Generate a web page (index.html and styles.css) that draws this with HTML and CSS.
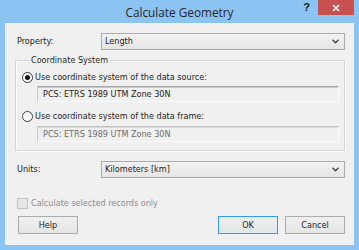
FILE: index.html
```html
<!DOCTYPE html>
<html lang="en">

<head>
    <meta charset="utf-8">
    <title>Calculate Geometry</title>
    <link rel="stylesheet" href="styles.css">
</head>

<body>
    <div class="window">
        <!-- title bar -->
        <div class="titlebar">
            <div></div>
            <div class="title">Calculate Geometry</div>
            <div class="caption-btns">
                <span class="help-q">?</span>
                <span class="close-btn">
                    <svg width="8" height="8" viewBox="0 0 8 8">
                        <path d="M1 1 L7 7 M7 1 L1 7" stroke="#fff" stroke-width="1.6" />
                    </svg>
                </span>
            </div>
        </div>

        <div class="client">
            <div class="field-row">
                <span class="field-label">Property:</span>
                <div class="combo">
                    <span>Length</span>
                    <svg class="chev" width="7" height="5" viewBox="0 0 7 5">
                        <path d="M0.5 0.8 L3.5 3.8 L6.5 0.8" fill="none" stroke="#444" stroke-width="1.3" />
                    </svg>
                </div>
            </div>

            <fieldset class="group">
                <legend>Coordinate System</legend>
                <div class="radio-row">
                    <span class="radio checked"></span>
                    <span>Use coordinate system of the data source:</span>
                </div>
                <div class="textbox">PCS: ETRS 1989 UTM Zone 30N</div>
                <div class="radio-row second">
                    <span class="radio"></span>
                    <span>Use coordinate system of the data frame:</span>
                </div>
                <div class="textbox disabled">PCS: ETRS 1989 UTM Zone 30N</div>
            </fieldset>

            <div class="field-row units">
                <span class="field-label">Units:</span>
                <div class="combo">
                    <span>Kilometers [km]</span>
                    <svg class="chev" width="7" height="5" viewBox="0 0 7 5">
                        <path d="M0.5 0.8 L3.5 3.8 L6.5 0.8" fill="none" stroke="#444" stroke-width="1.3" />
                    </svg>
                </div>
            </div>

            <div class="check-row">
                <span class="checkbox"></span>
                <span>Calculate selected records only</span>
            </div>

            <div class="buttons">
                <button class="btn">Help</button>
                <div class="spacer"></div>
                <button class="btn default">OK</button>
                <button class="btn">Cancel</button>
            </div>
        </div>
    </div>
</body>

</html>
```

FILE: styles.css
```css
html,
body {
    margin: 0;
    padding: 0;
}

body {
    width: 359px;
    height: 250px;
    background: #8bc3f2;
    font-family: "DejaVu Sans", sans-serif;
    font-stretch: condensed;
    font-size: 9px;
    line-height: 13px;
    color: #1e1e1e;
    overflow: hidden;
}

.window {
    display: flex;
    flex-direction: column;
    height: 250px;
}

/* title bar */
.titlebar {
    height: 23px;
    display: grid;
    grid-template-columns: 1fr auto 1fr;
}

.title {
    font-family: "Open Sans", sans-serif;
    font-stretch: normal;
    font-size: 11.8px;
    line-height: 24px;
    color: #262626;
}

.caption-btns {
    display: flex;
    justify-content: flex-end;
    align-items: flex-start;
    padding-right: 5px;
}

.help-q {
    font-family: "Liberation Sans", sans-serif;
    font-weight: bold;
    font-size: 11px;
    line-height: 15px;
    color: #1a1a1a;
    margin-right: 8px;
}

.close-btn {
    width: 36px;
    height: 15px;
    background: #c75050;
    display: flex;
    align-items: center;
    justify-content: center;
}

/* client area */
.client {
    margin: 0 5px;
    height: 222px;
    background: #f0f0f0;
    padding: 10px 9px 0 10px;
    box-sizing: border-box;
}

.field-row {
    display: flex;
    align-items: center;
    height: 17px;
}

.field-label {
    width: 84px;
    padding-left: 2px;
}

.combo {
    flex: 1;
    height: 17px;
    box-sizing: border-box;
    border: 1px solid #acacac;
    background: linear-gradient(#f2f2f2, #e5e5e5);
    display: flex;
    align-items: center;
    justify-content: space-between;
    padding: 0 5px 0 3px;
}

.group {
    margin: 5px 0 0 0;
    padding: 5px 5px 8px 6px;
    border: 1px solid #d5d5d5;
    box-shadow: inset 1px 1px 0 #fff, 1px 1px 0 #fff;
}

.group legend {
    margin-left: 7px;
    padding: 0 2px;
    line-height: 11px;
}

.radio-row {
    display: flex;
    align-items: center;
    height: 13px;
}

.radio-row.second {
    margin-top: 8px;
}

.radio {
    width: 9px;
    height: 9px;
    border: 1px solid #3c3c3c;
    border-radius: 50%;
    background: #fff;
    margin-right: 2px;
    position: relative;
}

.radio.checked::after {
    content: "";
    position: absolute;
    left: 2px;
    top: 2px;
    width: 5px;
    height: 5px;
    border-radius: 50%;
    background: #111;
}

.textbox {
    margin: 2px 0 0 15px;
    height: 16px;
    box-sizing: border-box;
    border: 1px solid #fafafa;
    border-top-color: #a8a8a8;
    border-left-color: #c8c8c8;
    box-shadow: inset 0 1px 0 #c8c8c8;
    padding: 1px 5px 0;
    line-height: 13px;
}

.textbox.disabled {
    margin-top: 3px;
    color: #6d6d6d;
    border-top-color: #c0c0c0;
    box-shadow: inset 0 1px 0 #d8d8d8;
}

.field-row.units {
    margin-top: 10px;
}

.check-row {
    display: flex;
    align-items: center;
    height: 13px;
    margin-top: 19px;
    padding-left: 2px;
    color: #8d8d8d;
}

.checkbox {
    width: 9px;
    height: 9px;
    border: 1px solid #c2c2c2;
    background: #e6e6e6;
    margin-right: 3px;
}

.buttons {
    display: flex;
    gap: 7px;
    margin-top: 6px;
    padding: 0 0 0 3px;
}

.spacer {
    flex: 1;
}

.btn {
    width: 60px;
    height: 18px;
    padding: 0;
    font: inherit;
    color: #1e1e1e;
    border: 1px solid #acacac;
    background: linear-gradient(#f0f0f0, #e5e5e5);
}

.btn.default {
    border-color: #3399ff;
    box-shadow: inset 0 0 0 1px #dcecfc;
}
```
